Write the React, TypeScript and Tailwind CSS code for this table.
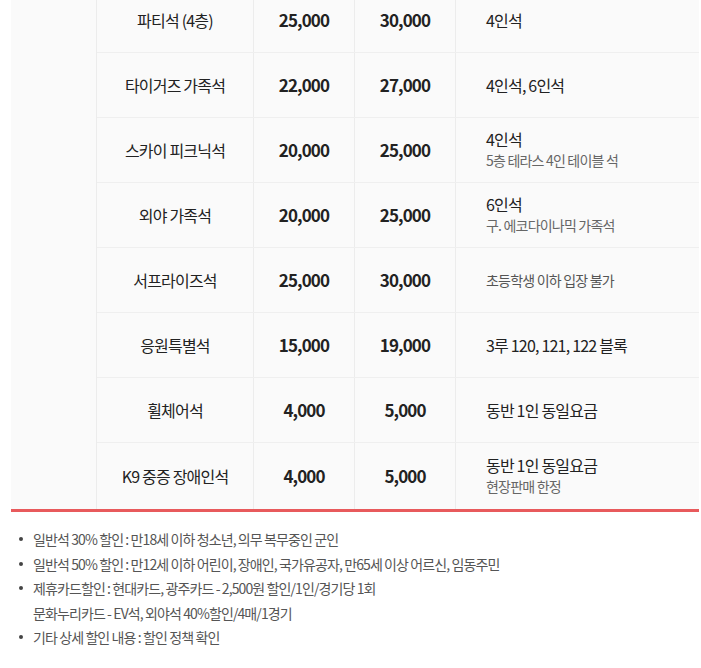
import React from 'react';

type Row = {
  name: string;
  adult: string;
  child: string;
  note: string;
  sub?: string;
  noteMuted?: boolean;
};

const ROWS: Row[] = [
  { name: '파티석 (4층)', adult: '25,000', child: '30,000', note: '4인석' },
  { name: '타이거즈 가족석', adult: '22,000', child: '27,000', note: '4인석, 6인석' },
  { name: '스카이 피크닉석', adult: '20,000', child: '25,000', note: '4인석', sub: '5층 테라스 4인 테이블 석' },
  { name: '외야 가족석', adult: '20,000', child: '25,000', note: '6인석', sub: '구. 에코다이나믹 가족석' },
  { name: '서프라이즈석', adult: '25,000', child: '30,000', note: '초등학생 이하 입장 불가', noteMuted: true },
  { name: '응원특별석', adult: '15,000', child: '19,000', note: '3루 120, 121, 122 블록' },
  { name: '휠체어석', adult: '4,000', child: '5,000', note: '동반 1인 동일요금' },
  { name: 'K9 중증 장애인석', adult: '4,000', child: '5,000', note: '동반 1인 동일요금', sub: '현장판매 한정' },
];

const NOTICES = [
  ['일반석 30% 할인 : 만18세 이하 청소년, 의무 복무중인 군인'],
  ['일반석 50% 할인 : 만12세 이하 어린이, 장애인, 국가유공자, 만65세 이상 어르신, 임동주민'],
  ['제휴카드할인 : 현대카드, 광주카드 - 2,500원 할인/1인/경기당 1회', '문화누리카드 - EV석, 외야석 40%할인/4매/1경기'],
  ['기타 상세 할인 내용 : 할인 정책 확인'],
];

export default function App() {
  return (
    <div className="w-[701px] h-[668px] overflow-hidden bg-white font-['Noto_Sans_CJK_KR',sans-serif] text-[#222]">
      {/* Price table */}
      <div className="ml-[11px] mr-[2px] -mt-[12px] flex border-b-[3px] border-[#e85a5c]">
        <div className="w-[86px] shrink-0 bg-[#fafafa] border-r border-[#ececec]" />
        <div className="flex-1 flex flex-col">
          {ROWS.map((row, i) => (
            <div
              key={i}
              className={`grid grid-cols-[157px_101px_101px_1fr] h-[65px] bg-[#fafafa] ${
                i < ROWS.length - 1 ? 'border-b border-[#efefef]' : 'h-[66px]'
              }`}
            >
              <div className="flex items-center justify-center border-r border-[#ececec] text-[16px] tracking-[-0.8px]">
                {row.name}
              </div>
              <div className="flex items-center justify-center border-r border-[#ececec] text-[17px] font-bold tracking-[-0.9px]">
                {row.adult}
              </div>
              <div className="flex items-center justify-center border-r border-[#ececec] text-[17px] font-bold tracking-[-0.9px]">
                {row.child}
              </div>
              <div className="flex flex-col justify-center pl-[30px]">
                <span
                  className={`leading-[21px] tracking-[-0.8px] ${
                    row.noteMuted ? 'text-[14px] text-[#555]' : 'text-[16px]'
                  }`}
                >
                  {row.note}
                </span>
                {row.sub && (
                  <span className="text-[14px] leading-[21px] text-[#666] tracking-[-0.8px]">{row.sub}</span>
                )}
              </div>
            </div>
          ))}
        </div>
      </div>

      {/* Discount notices */}
      <ul className="mt-[15px] pl-[19px] flex flex-col text-[14px] leading-[24.6px] text-[#555] tracking-[-0.9px]">
        {NOTICES.map((lines, i) => (
          <li key={i} className="flex">
            <span className="w-[14px] shrink-0 flex justify-start pt-[10px]">
              <span className="w-[4px] h-[4px] rounded-full bg-[#444]" />
            </span>
            <span className="flex flex-col">
              {lines.map((l, j) => (
                <span key={j}>{l}</span>
              ))}
            </span>
          </li>
        ))}
      </ul>
    </div>
  );
}
